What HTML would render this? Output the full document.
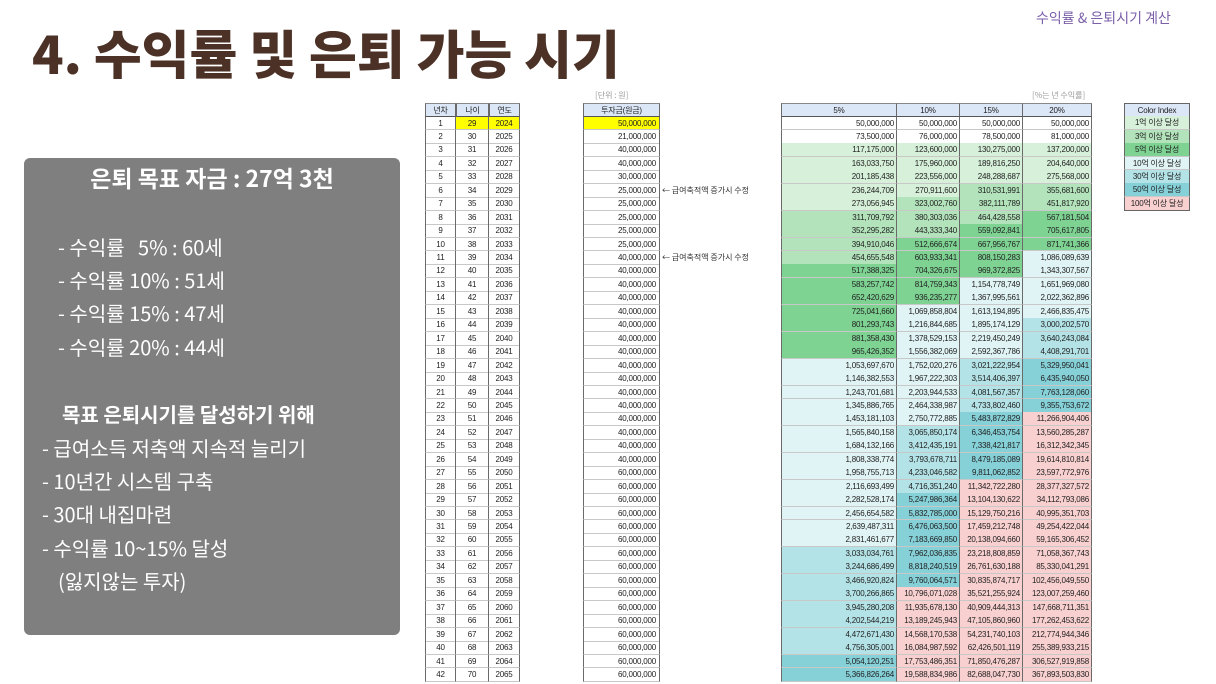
<!DOCTYPE html>
<html><head><meta charset="utf-8">
<style>
html,body{margin:0;padding:0;}
body{width:1216px;height:684px;background:#fff;position:relative;overflow:hidden;font-family:"Liberation Sans","Noto Sans CJK KR",sans-serif;}
.ab{position:absolute;}
#title{left:32px;top:14px;font-family:"Noto Sans CJK KR",sans-serif;font-weight:900;font-size:52px;color:#4b3126;white-space:nowrap;transform:scaleX(1.0);transform-origin:left top;letter-spacing:0px;}
#sub{left:1036px;top:8px;font-size:14px;color:#7b5fa8;font-family:"Noto Sans CJK KR",sans-serif;}
#panel{left:24px;top:158px;width:376px;height:477px;background:#7f7f7f;border-radius:6px;color:#fff;font-family:"Noto Sans CJK KR",sans-serif;}
#panel div{position:absolute;white-space:nowrap;font-size:20px;line-height:24px;}
.c{position:absolute;box-sizing:border-box;font-size:8px;letter-spacing:-0.2px;line-height:13px;color:#222;white-space:nowrap;overflow:hidden;font-family:"Liberation Sans","Noto Sans CJK KR",sans-serif;border-right:1px solid #6a6a6a;border-bottom:1px solid #c8c8c8;}
.h{background:#dbe6f6;border-bottom:1px solid #555;text-align:center;}
.r{text-align:right;padding-right:3px;}
.m{text-align:center;}
.note{position:absolute;font-size:8px;color:#333;font-family:"Noto Sans CJK KR",sans-serif;white-space:nowrap;}
</style></head><body>
<div id="title" class="ab">4. 수익률 및 은퇴 가능 시기</div>
<div id="sub" class="ab">수익률 &amp; 은퇴시기 계산</div>
<div id="panel" class="ab">
<div style="left:0;width:376px;text-align:center;top:7px;font-size:23px;font-weight:bold;">은퇴 목표 자금 : 27억 3천</div>
<div style="left:34px;top:77px;">- 수익률 &nbsp;&nbsp;5% : 60세</div>
<div style="left:34px;top:110px;">- 수익률 10% : 51세</div>
<div style="left:34px;top:143px;">- 수익률 15% : 47세</div>
<div style="left:34px;top:177px;">- 수익률 20% : 44세</div>
<div style="left:38px;top:244px;font-weight:bold;">목표 은퇴시기를 달성하기 위해</div>
<div style="left:18px;top:278px;">- 급여소득 저축액 지속적 늘리기</div>
<div style="left:18px;top:311px;">- 10년간 시스템 구축</div>
<div style="left:18px;top:344px;">- 30대 내집마련</div>
<div style="left:18px;top:378px;">- 수익률 10~15% 달성</div>
<div style="left:34px;top:411px;">(잃지않는 투자)</div>
</div>
<div class="note" style="left:595px;top:90px;color:#999;">[단위 : 원]</div>
<div class="note" style="left:1032px;top:90px;color:#999;">[%는 년 수익률]</div>
<div id="t"></div>
<script>
var out='';
function cell(x,y,w,h,txt,cls,bg,extra){out+='<div class="c '+cls+'" style="left:'+x+'px;top:'+y+'px;width:'+w+'px;height:'+h+'px;'+(bg?'background:'+bg+';':'')+(extra||'')+'">'+txt+'</div>';}
var H0=103,R0=116.5,RH=13.45;
var inv=[50,21,40,40,30,25,25,25,25,25];
for(var i=10;i<26;i++)inv.push(40);
for(var i=26;i<42;i++)inv.push(60);
function fmt(v){return Math.round(v).toString().replace(/\B(?=(\d{3})+(?!\d))/g,',');}
function col(v){if(v>=1e10)return '#f9d0d0';if(v>=5e9)return '#86d0d8';if(v>=3e9)return '#b4e3e7';if(v>=1e9)return '#e0f3f5';if(v>=5e8)return '#7ed393';if(v>=3e8)return '#b2e3ba';if(v>=1e8)return '#d6f0d9';return '#fff';}
var L=[[425,31,'년차'],[456,33,'나이'],[489,31,'연도']];
L.forEach(function(c){cell(c[0],H0,c[1],R0-H0,c[2],'h','','border-left:1px solid #6a6a6a;border-top:1px solid #888;');});
cell(583,H0,77,R0-H0,'투자금(원금)','h','','border-left:1px solid #6a6a6a;border-top:1px solid #888;');
var R=[[781,116,'5%',0.05],[897,63,'10%',0.10],[960,63,'15%',0.15],[1023,69,'20%',0.20]];
R.forEach(function(c){cell(c[0],H0,c[1],R0-H0,c[2],'h','',(c[0]==781?'border-left:1px solid #6a6a6a;':'')+'border-top:1px solid #888;');});
var vals=R.map(function(){return 0;});
for(var i=0;i<42;i++){
 var y=R0+i*RH, h=RH+0.5;
 var yl=i==0?'#ffff00':'';
 cell(425,y,31,h,i+1,'m','','border-left:1px solid #6a6a6a;');
 cell(456,y,33,h,29+i,'m',yl);
 cell(489,y,31,h,2024+i,'m',yl);
 cell(583,y,77,h,fmt(inv[i]*1e6),'r',yl,'border-left:1px solid #6a6a6a;');
 R.forEach(function(c,k){
  vals[k]= i==0?50e6:vals[k]*(1+c[3])+inv[i]*1e6;
  cell(c[0],y,c[1],h,fmt(vals[k]),'r',col(vals[k]),(k==0?'border-left:1px solid #6a6a6a;':'')+'padding-right:2px;');
 });
}
out+='<div class="note" style="left:662px;top:'+(R0+5*RH+1)+'px;">← 급여축적액 증가시 수정</div>';
out+='<div class="note" style="left:662px;top:'+(R0+10*RH+1)+'px;">← 급여축적액 증가시 수정</div>';
var CI=[['Color Index','#dbe6f6'],['1억 이상 달성','#d6f0d9'],['3억 이상 달성','#b2e3ba'],['5억 이상 달성','#7ed393'],['10억 이상 달성','#e0f3f5'],['30억 이상 달성','#b4e3e7'],['50억 이상 달성','#86d0d8'],['100억 이상 달성','#f9d0d0']];
CI.forEach(function(c,k){cell(1124,103+k*13.4,66,13.9,c[0],'m',c[1],'border-left:1px solid #666;border-right:1px solid #666;'+(k==0?'border-top:1px solid #666;border-bottom:1px solid #555;':'')+(k==7?'border-bottom:1px solid #666;':''));});
document.getElementById('t').innerHTML=out;
</script>
</body></html>
